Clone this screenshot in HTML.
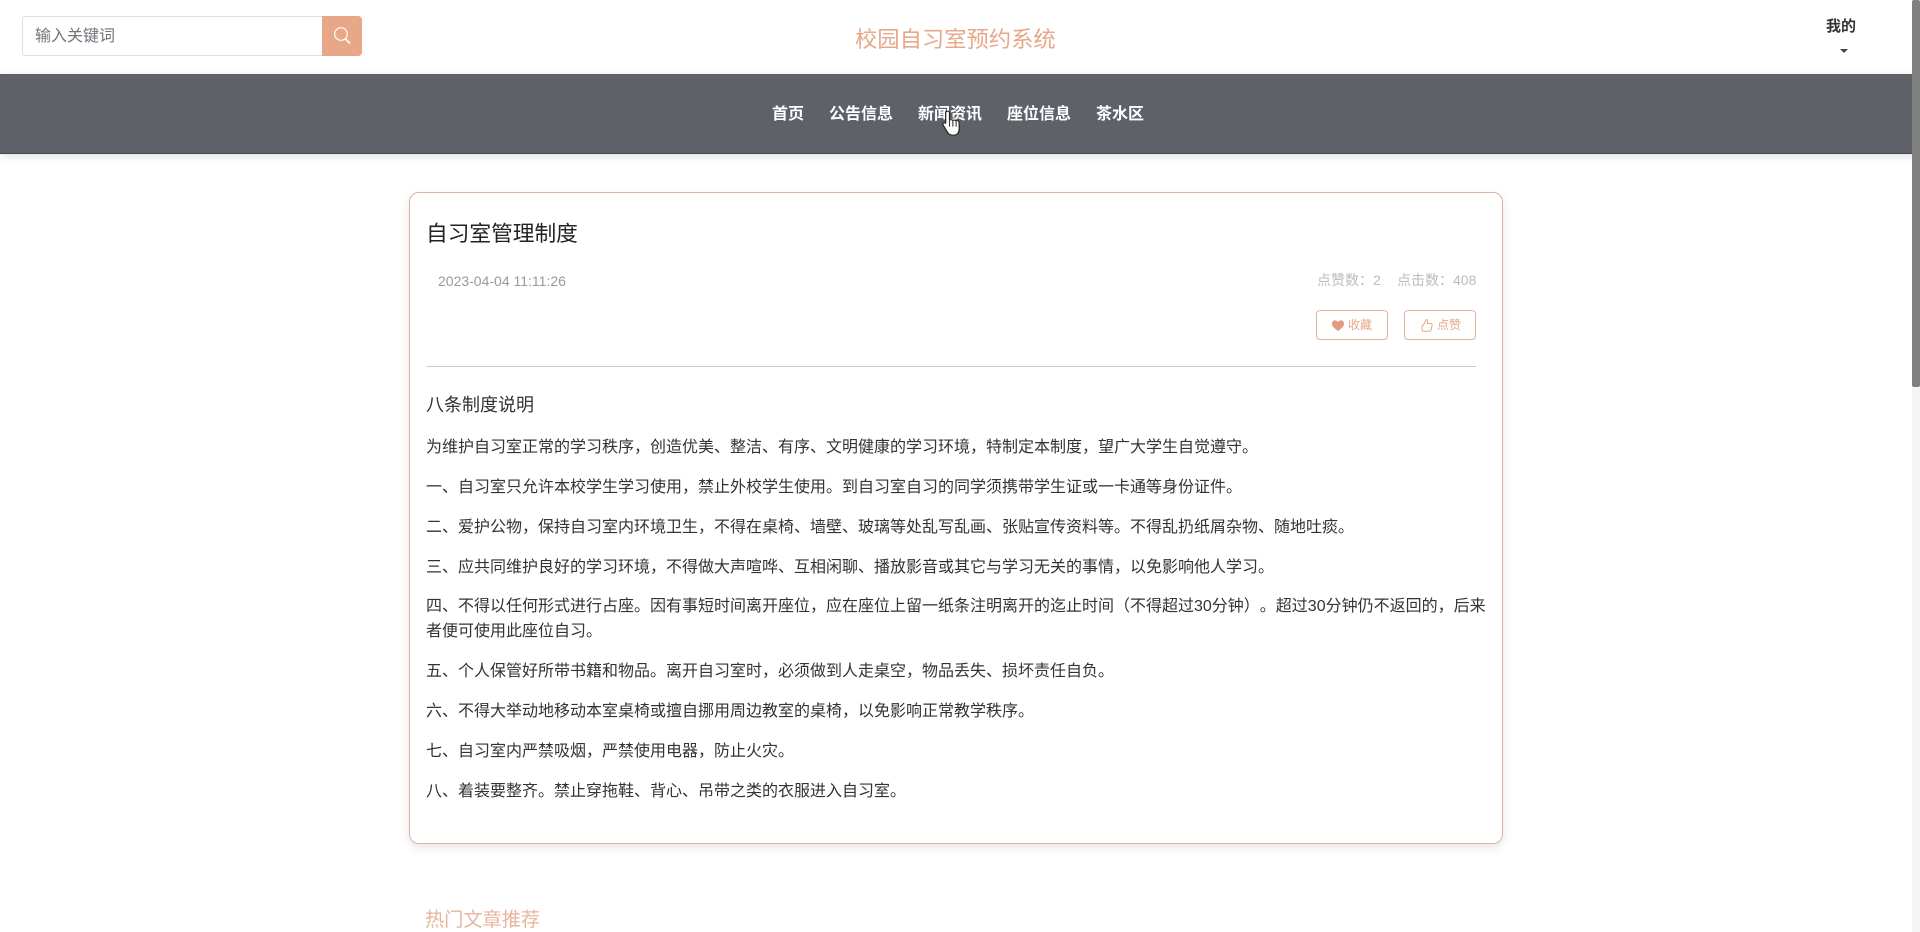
<!DOCTYPE html>
<html lang="zh-CN">
<head>
<meta charset="utf-8">
<title>自习室管理制度</title>
<style>
html,body{margin:0;padding:0;width:1920px;height:932px;overflow:hidden;background:#fff}
body{position:relative;font-family:"Liberation Sans","Noto Sans CJK SC",sans-serif;color:#333;text-spacing-trim:space-all}
.t{position:absolute;white-space:nowrap;line-height:30px;height:30px}
.p{left:426px;font-size:16px;color:#333}
.nav{top:100px;font-size:16px;font-weight:700;color:#fff}
.btn{position:absolute;top:310px;width:70px;height:28px;border:1px solid #e0b2a0;border-radius:4px;background:#fff}
</style>
</head>
<body>
<div style="position:absolute;left:22px;top:16px;width:300px;height:38px;border:1px solid #dcdfe6;border-right:0;border-radius:4px 0 0 4px"></div>
<div class="t" style="left:35px;top:22px;font-size:16px;color:#70737a">输入关键词</div>
<div style="position:absolute;left:322px;top:16px;width:40px;height:40px;background:#e8a888;border-radius:0 4px 4px 0">
<svg width="40" height="40" viewBox="0 0 40 40" fill="none" stroke="#fff" stroke-width="1.2"><circle cx="19" cy="18" r="6.3"/><path d="M23.5 23l4.5 4.5" stroke-width="1.6"/></svg>
</div>
<div class="t" style="left:855px;top:25px;font-size:22.3px;color:#e6a888">校园自习室预约系统</div>
<div class="t" style="left:1826px;top:12px;font-size:15px;font-weight:700;color:#333">我的</div>
<div style="position:absolute;left:1840px;top:49px;width:0;height:0;border-left:4px solid transparent;border-right:4px solid transparent;border-top:4px solid #444"></div>
<div style="position:absolute;left:0;top:74px;width:1920px;height:79px;background:#5f6169;border-bottom:1px solid #47484e;box-shadow:0 2px 8px rgba(70,70,110,.18)"></div>
<div class="t nav" style="left:772px">首页</div>
<div class="t nav" style="left:829px">公告信息</div>
<div class="t nav" style="left:918px">新闻资讯</div>
<div class="t nav" style="left:1007px">座位信息</div>
<div class="t nav" style="left:1096px">茶水区</div>
<svg style="position:absolute;left:941px;top:109px" width="24" height="28" viewBox="0 0 20 27" preserveAspectRatio="none">
<path d="M5.500 2.200c1 0 1.600.7 1.600 1.700v7c.4-.8 2.500-.8 2.800.3.500-.8 2.400-.7 2.700.5.600-.6 2.400-.4 2.500 1.200l.1 6.500c0 3-1.700 5.800-4.500 5.800H9.300c-2 0-3-1.200-4-3L1.700 15.300c-.7-1.400 1.100-2.700 2.200-1.300l0 .1V3.900c0-1 .6-1.700 1.600-1.700z" fill="#fff" stroke="#222" stroke-width="1"/>
<path d="M7.100 11v6M9.900 11.500v5.500M12.600 12.500v4.500" stroke="#333" stroke-width=".9" fill="none"/>
</svg>
<div style="position:absolute;left:409px;top:192px;width:1092px;height:650px;border:1px solid #dfb3a3;border-radius:10px;background:#fff;box-shadow:0 4px 10px rgba(0,0,0,.1)"></div>
<div class="t" style="left:426px;top:219px;font-size:21.7px;color:#222">自习室管理制度</div>
<div class="t" style="left:438px;top:266px;font-size:14px;color:#999;font-family:'Liberation Sans',sans-serif">2023-04-04 11:11:26</div>
<div class="t" style="left:1317px;top:265px;font-size:14px;color:#bbb">点赞数：2</div>
<div class="t" style="left:1397px;top:265px;font-size:14px;color:#bbb">点击数：408</div>
<div class="btn" style="left:1316px"></div>
<div class="btn" style="left:1404px"></div>
<svg style="position:absolute;left:1331px;top:319px" width="14" height="13" viewBox="0 0 14 13"><path d="M7 12C3 9 1 7.200 1 4.600 1 2.700 2.400 1.400 4 1.400c1.200 0 2.300.6 3 1.700.7-1.100 1.800-1.700 3-1.700 1.600 0 3 1.300 3 3.200C13 7.200 11 9 7 12z" fill="#e09c7c"/></svg>
<div class="t" style="left:1348px;top:310px;font-size:12px;color:#e6a888">收藏</div>
<svg style="position:absolute;left:1420px;top:318px" width="14" height="15" viewBox="0 0 14 15" fill="none" stroke="#e6a888" stroke-width="1"><path d="M3.500 7L6.200 1.500c1 0 1.600.8 1.400 1.800L7.200 5.500h3.600c.9 0 1.500.8 1.300 1.600l-1 5c-.2.700-.7 1.100-1.400 1.100H3.500c-.9 0-1.500-.6-1.500-1.500V8.500C2 7.600 2.600 7 3.500 7z"/></svg>
<div class="t" style="left:1437px;top:310px;font-size:12px;color:#e6a888">点赞</div>
<div style="position:absolute;left:426px;top:366px;width:1050px;height:1px;background:#ccc"></div>
<div class="t" style="left:426px;top:390px;font-size:18px;color:#333">八条制度说明</div>
<div class="t p" style="top:433px">为维护自习室正常的学习秩序，创造优美、整洁、有序、文明健康的学习环境，特制定本制度，望广大学生自觉遵守。</div>
<div class="t p" style="top:473px">一、自习室只允许本校学生学习使用，禁止外校学生使用。到自习室自习的同学须携带学生证或一卡通等身份证件。</div>
<div class="t p" style="top:513px">二、爱护公物，保持自习室内环境卫生，不得在桌椅、墙壁、玻璃等处乱写乱画、张贴宣传资料等。不得乱扔纸屑杂物、随地吐痰。</div>
<div class="t p" style="top:553px">三、应共同维护良好的学习环境，不得做大声喧哗、互相闲聊、播放影音或其它与学习无关的事情，以免影响他人学习。</div>
<div class="t p" style="top:592px">四、不得以任何形式进行占座。因有事短时间离开座位，应在座位上留一纸条注明离开的迄止时间（不得超过30分钟）。超过30分钟仍不返回的，后来</div>
<div class="t p" style="top:617px">者便可使用此座位自习。</div>
<div class="t p" style="top:657px">五、个人保管好所带书籍和物品。离开自习室时，必须做到人走桌空，物品丢失、损坏责任自负。</div>
<div class="t p" style="top:697px">六、不得大举动地移动本室桌椅或擅自挪用周边教室的桌椅，以免影响正常教学秩序。</div>
<div class="t p" style="top:737px">七、自习室内严禁吸烟，严禁使用电器，防止火灾。</div>
<div class="t p" style="top:777px">八、着装要整齐。禁止穿拖鞋、背心、吊带之类的衣服进入自习室。</div>
<div class="t" style="left:425px;top:906px;font-size:19.2px;color:#e8b49c">热门文章推荐</div>
<div style="position:absolute;left:1912px;top:0;width:8px;height:932px;background:#f5f5f5"></div>
<div style="position:absolute;left:1912px;top:0;width:8px;height:387px;background:#808080;border-radius:2px"></div>
</body>
</html>
